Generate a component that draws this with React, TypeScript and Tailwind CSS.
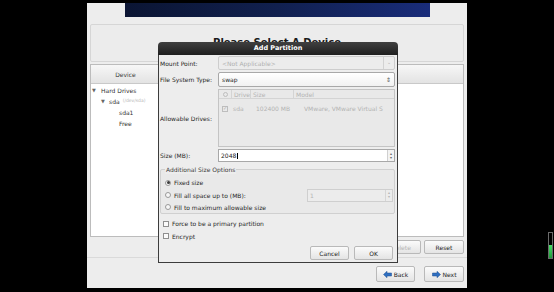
import React from "react";

const Radio = ({ on = false }: { on?: boolean }) => (
  <span className="flex h-[6px] w-[6px] items-center justify-center rounded-full border border-[#9a9a9a] bg-[#f7f7f7]">
    {on && <span className="h-[3px] w-[3px] rounded-full bg-[#3a3a3a]" />}
  </span>
);

const Check = () => (
  <span className="h-[6px] w-[6px] border border-[#8e8e8e] bg-[#fafafa]" />
);

const Btn = ({
  children,
  w,
  dim = false,
}: {
  children: React.ReactNode;
  w: string;
  dim?: boolean;
}) => (
  <div
    className={`flex h-full items-center justify-center gap-[2px] rounded-[2px] border border-[#b9b9b9] bg-linear-to-b from-[#fbfbfb] to-[#e4e4e4] text-[6px] ${w} ${
      dim ? "text-[#b5b5b5]" : "text-[#222]"
    }`}
  >
    {children}
  </div>
);

const Arrow = ({ left = false }: { left?: boolean }) => (
  <svg width="9" height="7" viewBox="0 0 9 7" className={left ? "" : "scale-x-[-1]"}>
    <path d="M0.5 3.5 L4 0.3 V2 H8.5 V5 H4 V6.7 Z" fill="#2f6fc0" stroke="#1d4f92" strokeWidth="0.5" />
  </svg>
);

const Dialog = () => (
  <div className="absolute left-[158px] top-[42px] flex h-[221px] w-[240px] flex-col text-[6px] text-[#262626]">
    <div className="flex h-[13px] items-center justify-center rounded-t-[4px] bg-linear-to-b from-[#404040] to-[#1f1f1f] text-[6.5px] font-bold text-white">
      Add Partition
    </div>
    <div className="flex flex-1 flex-col border-x border-b border-[#3c3c3c] bg-[#ededed] pl-[1px] pr-[2px] pt-[1px]">
      {/* mount point */}
      <div className="flex h-[14px] items-center">
        <span className="w-[58px]">Mount Point:</span>
        <div className="flex h-full flex-1 items-center rounded-[2px] border border-[#cdcdcd] bg-[#ececec] text-[#b0b0b0]">
          <span className="flex-1 pl-[3px]">&lt;Not Applicable&gt;</span>
          <span className="flex h-full w-[11px] items-center justify-center border-l border-[#d2d2d2] text-[5px]">
            ⌄
          </span>
        </div>
      </div>
      {/* file system */}
      <div className="mt-[2px] flex h-[15px] items-center">
        <span className="w-[58px]">File System Type:</span>
        <div className="flex h-full flex-1 items-center rounded-[2px] border border-[#a8a8a8] bg-linear-to-b from-white to-[#f1f1f1] text-[#222]">
          <span className="flex-1 pl-[3px]">swap</span>
          <span className="w-[8px] text-[6px] leading-none text-[#555]">⇕</span>
        </div>
      </div>
      {/* drives */}
      <div className="mt-[2px] flex h-[58px] items-center">
        <span className="w-[58px]">Allowable Drives:</span>
        <div className="flex h-full flex-1 flex-col border border-[#c4c4c4] bg-[#e9e9e9] text-[#b3b3b3]">
          <div className="flex h-[9px] items-center border-b border-[#d4d4d4]">
            <span className="flex w-[12px] justify-center">
              <span className="h-[5px] w-[5px] rounded-full border border-[#bdbdbd]" />
            </span>
            <span className="w-[20px] border-x border-[#d4d4d4] pl-[2px]">Drive</span>
            <span className="w-[43px] border-r border-[#d4d4d4] pl-[2px]">Size</span>
            <span className="pl-[2px]">Model</span>
          </div>
          <div className="mt-[5px] flex items-center">
            <span className="flex w-[12px] justify-center">
              <span className="flex h-[6px] w-[6px] items-center justify-center border border-[#bdbdbd] text-[5px] leading-none">
                ✓
              </span>
            </span>
            <span className="w-[25px] pl-[2px]">sda</span>
            <span className="w-[48px]">102400 MB</span>
            <span>VMware, VMware Virtual S</span>
          </div>
        </div>
      </div>
      {/* size */}
      <div className="mt-[2px] flex h-[13px] items-center">
        <span className="w-[58px]">Size (MB):</span>
        <div className="flex h-full flex-1 items-center border border-[#a8a8a8] bg-white text-[#222]">
          <span className="flex-1 pl-[2px]">
            2048<span className="ml-[0.5px] inline-block h-[6px] w-[0.5px] bg-black align-middle" />
          </span>
          <span className="flex h-full w-[7px] flex-col items-center justify-center border-l border-[#d0d0d0] bg-[#f3f3f3] text-[4px] leading-[4px] text-[#666]">
            <span>▴</span>
            <span>▾</span>
          </span>
        </div>
      </div>
      {/* size options */}
      <div className="mt-[7px] flex h-[45px] flex-col rounded-[2px] border border-[#d0d0d0] bg-[#e9e9e9] pl-[4px]">
        <span className="-mt-[5px] w-fit bg-[#ededed] px-[1px] text-[#3a3a3a]">Additional Size Options</span>
        <div className="mt-[3px] flex h-[14px] items-center gap-[3px]">
          <Radio on />
          <span>Fixed size</span>
        </div>
        <div className="flex h-[14px] items-center gap-[3px]">
          <Radio />
          <span className="flex-1">Fill all space up to (MB):</span>
          <div className="mr-[1px] flex h-[13px] w-[86px] items-center border border-[#cfcfcf] bg-[#ececec] text-[#b5b5b5]">
            <span className="flex-1 pl-[2px]">1</span>
            <span className="flex h-full w-[7px] flex-col items-center justify-center border-l border-[#d6d6d6] text-[4px] leading-[4px]">
              <span>▴</span>
              <span>▾</span>
            </span>
          </div>
        </div>
        <div className="flex h-[14px] items-center gap-[3px]">
          <Radio />
          <span>Fill to maximum allowable size</span>
        </div>
      </div>
      {/* checkboxes */}
      <div className="mt-[3px] flex h-[13px] items-center gap-[3px] pl-[3px]">
        <Check />
        <span>Force to be a primary partition</span>
      </div>
      <div className="flex h-[12px] items-center gap-[3px] pl-[3px]">
        <Check />
        <span>Encrypt</span>
      </div>
      <div className="mt-[4px] flex h-[14px] justify-end gap-[5px] pr-[2px]">
        <Btn w="w-[39px]">Cancel</Btn>
        <Btn w="w-[39px]">OK</Btn>
      </div>
    </div>
  </div>
);

export default function App() {
  return (
    <div className="relative h-[292px] w-[554px] overflow-hidden bg-black font-['DejaVu_Sans',sans-serif]">
      <div className="ml-[87px] pt-[3px]">
        <div className="flex h-[285px] w-[380px] flex-col bg-[#ededed] text-[6px] text-[#2b2b2b]">
          <div className="ml-[38px] h-[14px] w-[305px] bg-linear-to-r from-[#0b1533] via-[#11204f] to-[#192c7a]" />
          <div className="mx-[3px] mt-[7px] flex h-[38px] flex-col items-center rounded-[2px] border border-[#d6d6d6] bg-[#ececec] pt-[13px]">
            <span className="text-[10px] font-bold leading-none text-[#1b1b1b]">Please Select A Device</span>
          </div>
          <div className="mx-[3px] mt-[2px] flex h-[173px] flex-col border border-[#bcbcbc] bg-white">
            <div className="flex h-[19px] border-b border-[#c9c9c9] bg-linear-to-b from-[#f7f7f7] to-[#e3e3e3]">
              <span className="flex w-[70px] items-center justify-center border-r border-[#d0d0d0] text-[#3a3a3a]">
                Device
              </span>
            </div>
            <div className="flex flex-col pt-[1px] text-[#333]">
              <div className="flex h-[11px] items-center pl-[1px]">
                <span className="w-[9px] text-[5px] text-[#666]">▼</span>
                <span>Hard Drives</span>
              </div>
              <div className="flex h-[11px] items-center pl-[10px]">
                <span className="w-[8px] text-[5px] text-[#666]">▼</span>
                <span>sda</span>
                <span className="ml-[3px] text-[4.5px] text-[#b8b8b8]">(/dev/sda)</span>
              </div>
              <div className="flex h-[11px] items-center pl-[28px]">sda1</div>
              <div className="flex h-[11px] items-center pl-[28px]">Free</div>
            </div>
          </div>
          <div className="mr-[3px] mt-[3px] flex h-[14px] justify-end gap-[3px]">
            <Btn w="w-[40px]" dim>
              Delete
            </Btn>
            <Btn w="w-[40px]">Reset</Btn>
          </div>
          <div className="mt-[3px] border-t border-[#dadada]" />
          <div className="mr-[3px] mt-[8px] flex h-[16px] justify-end gap-[9px]">
            <Btn w="w-[39px]">
              <Arrow left />
              Back
            </Btn>
            <Btn w="w-[40px]">
              <Arrow />
              Next
            </Btn>
          </div>
        </div>
      </div>
      <Dialog />
      <div className="absolute left-[548px] top-[232px] flex h-[27px] w-[5px] flex-col justify-end border border-[#6a6a6a] bg-black">
        <div className="h-[13px] bg-linear-to-b from-[#4be06a] to-[#1f9a3a]" />
      </div>
    </div>
  );
}
